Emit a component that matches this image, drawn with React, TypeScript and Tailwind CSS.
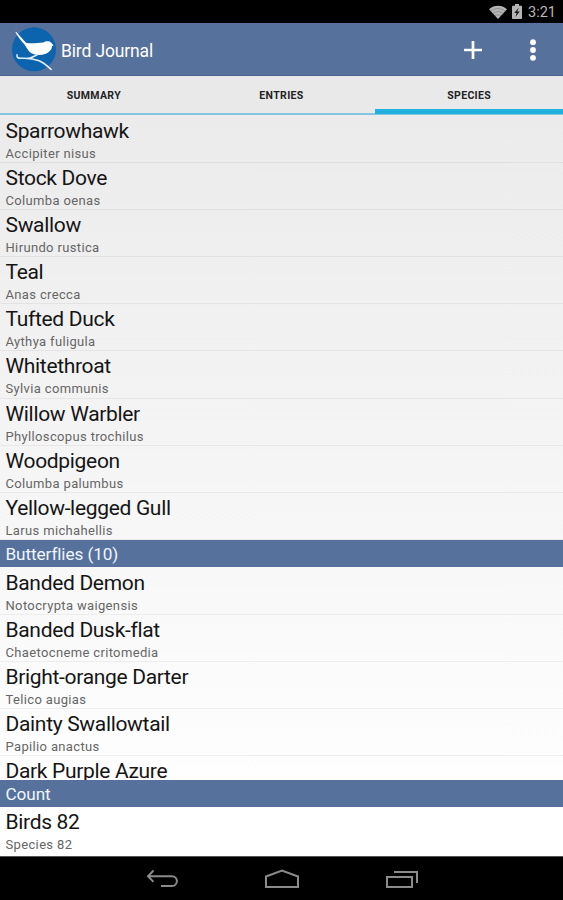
type Species = { name: string; latin: string };

const birds: Species[] = [
  { name: "Sparrowhawk", latin: "Accipiter nisus" },
  { name: "Stock Dove", latin: "Columba oenas" },
  { name: "Swallow", latin: "Hirundo rustica" },
  { name: "Teal", latin: "Anas crecca" },
  { name: "Tufted Duck", latin: "Aythya fuligula" },
  { name: "Whitethroat", latin: "Sylvia communis" },
  { name: "Willow Warbler", latin: "Phylloscopus trochilus" },
  { name: "Woodpigeon", latin: "Columba palumbus" },
  { name: "Yellow-legged Gull", latin: "Larus michahellis" },
];

const butterflies: Species[] = [
  { name: "Banded Demon", latin: "Notocrypta waigensis" },
  { name: "Banded Dusk-flat", latin: "Chaetocneme critomedia" },
  { name: "Bright-orange Darter", latin: "Telico augias" },
  { name: "Dainty Swallowtail", latin: "Papilio anactus" },
  { name: "Dark Purple Azure", latin: "" },
];

const tabs = ["SUMMARY", "ENTRIES", "SPECIES"];

function StatusBar() {
  return (
    <div className="flex h-[23px] shrink-0 items-center justify-end bg-black pr-[7px] text-[#b9b9b9]">
      <svg className="mt-px h-[14px] w-[18px]" viewBox="0 0 18 14">
        <path d="M0 4.2C5.2-.4 12.8-.4 18 4.2L9 14Z" fill="#b5b5b5" />
        <path
          d="M1.8 6.2C6 2.7 12 2.7 16.2 6.2M3.8 8.5C6.8 6 11.2 6 14.2 8.5M6 10.9c1.8-1.4 4.2-1.4 6 0"
          fill="none"
          stroke="#777"
          strokeWidth=".6"
        />
      </svg>
      <svg className="ml-[5px] h-[15px] w-[10px]" viewBox="0 0 10 15">
        <path d="M3 0h4v1.8h2.2q.8 0 .8.8v11.6q0 .8-.8.8H.8q-.8 0-.8-.8V2.6q0-.8.8-.8H3Z" fill="#b5b5b5" />
        <path d="M6.7 3.8 2.2 9h2.4l-1.2 4 4.4-5.4H5.3Z" fill="#1c1c1c" />
      </svg>
      <span className="mt-[3px] ml-[6px] text-[14.5px] leading-none">3:21</span>
    </div>
  );
}

function Logo() {
  return (
    <svg className="h-[45px] w-[45px]" viewBox="0 0 45 45">
      <circle cx="22" cy="22.3" r="22" fill="#0d64ae" />
      {/* bird */}
      <path
        d="M3.2 4.8 4.6 5.2 14 15.8C20 17 26 15.6 31.5 15.5C33.5 13.8 37.5 13.8 39.2 15.7L41.5 18.2L40 19.2C40 22.5 37 25.5 33 27C29 28.3 23 28.3 19 26C16 24 14.5 20.5 12.8 17.8C9 14 6 10 3.2 4.8Z"
        fill="#fff"
      />
      {/* branch */}
      <path
        d="M5 27.8c-.6 3 1.8 3.700 4.200 3.500 6-.4 12 .2 18 2.500 5 2.200 8 5.200 12 8.700M15.500 31.600c4-.2 5.500-2.300 9.500-3.600"
        fill="none"
        stroke="#e3f0ff"
        strokeWidth="1.5"
        strokeLinecap="round"
      />
    </svg>
  );
}

function ActionBar() {
  return (
    <header className="flex h-[53px] shrink-0 items-center border-b border-[#49648e] bg-[#55719c] pl-3 text-white">
      <Logo />
      <h1 className="mt-[5px] ml-[4px] text-[17.5px] leading-none tracking-[-0.15px]">Bird Journal</h1>
      <svg className="mt-[2px] ml-auto h-[18px] w-[18px]" viewBox="0 0 18 18">
        <path d="M9 0v18M0 9h18" stroke="#fff" strokeWidth="2.7" />
      </svg>
      <svg className="mt-[2px] mr-[27px] ml-[48px] h-[22px] w-[6px]" viewBox="0 0 6 22" fill="#fff">
        <circle cx="3" cy="3.2" r="2.9" />
        <circle cx="3" cy="11" r="2.9" />
        <circle cx="3" cy="18.8" r="2.9" />
      </svg>
    </header>
  );
}

function Tabs() {
  return (
    <nav className="grid h-[39px] shrink-0 grid-cols-3 border-b-2 border-[#86c5df] bg-[#e9e9e9]">
      {tabs.map((tab) => (
        <div key={tab} className="relative flex items-center justify-center">
          <span className="mt-[3px] text-[10.5px] leading-none font-bold tracking-[0.35px] text-[#222]">{tab}</span>
          {tab === "SPECIES" && <span className="absolute inset-x-0 -bottom-px h-[5px] bg-[#1fb0dd]" />}
        </div>
      ))}
    </nav>
  );
}

function SectionHeader({ title }: { title: string }) {
  return (
    <div className="flex h-[27.5px] shrink-0 items-center bg-[#55719c] pt-[2px] pl-[5.5px] text-[17.2px] leading-none tracking-[-0.1px] text-[#f1f6ff]">
      {title}
    </div>
  );
}

function RowText({ name, latin }: Species) {
  return (
    <>
      <div className="pt-[3px] text-[21px] leading-[24px] tracking-[-0.32px] text-[#151515]">{name}</div>
      <div className="mt-[3px] text-[13px] leading-[15px] tracking-[0.35px] text-[#666]">{latin}</div>
    </>
  );
}

function Row(species: Species) {
  return (
    <div className="h-[47.1px] shrink-0 border-b border-black/5 pl-[5.5px]">
      <RowText {...species} />
    </div>
  );
}

function NavBar() {
  return (
    <div className="flex h-[44px] shrink-0 items-center justify-between border-t border-[#555] bg-black pr-[145px] pl-[146px]">
      <svg className="h-5 w-8" viewBox="0 0 32 20" fill="none" stroke="#8b8b8b" strokeWidth="2">
        <path d="M7.5 1.5 2 7.2l5.500 5.700M2 7.200h24a4.900 4.900 0 0 1 0 9.800H15" />
      </svg>
      <svg className="-ml-px h-5 w-9" viewBox="0 0 36 20" fill="none" stroke="#8b8b8b" strokeWidth="2">
        <path d="M2 18V7.5L18 1.500l16 6V18Z" />
      </svg>
      <svg className="h-5 w-8" viewBox="0 0 32 20" fill="none" stroke="#8b8b8b" strokeWidth="2">
        <path d="M1 8h25v10H1ZM8 3h23v11" />
      </svg>
    </div>
  );
}

export default function App() {
  return (
    <div
      className="flex h-[900px] w-[563px] flex-col overflow-hidden bg-white"
      style={{ fontFamily: 'Roboto, "Liberation Sans", sans-serif' }}
    >
      <StatusBar />
      <ActionBar />
      <Tabs />
      <main className="flex h-[664.5px] shrink-0 flex-col overflow-hidden bg-linear-to-b from-[#ebebeb] to-[#fefefe] pt-px">
        {birds.map((bird) => (
          <Row key={bird.name} {...bird} />
        ))}
        <SectionHeader title="Butterflies (10)" />
        <div className="pt-[0.3px]">
          {butterflies.map((butterfly) => (
            <Row key={butterfly.name} {...butterfly} />
          ))}
        </div>
      </main>
      <SectionHeader title="Count" />
      <div className="h-[49px] shrink-0 bg-white pl-[5.5px]">
        <RowText name="Birds 82" latin="Species 82" />
      </div>
      <NavBar />
    </div>
  );
}
